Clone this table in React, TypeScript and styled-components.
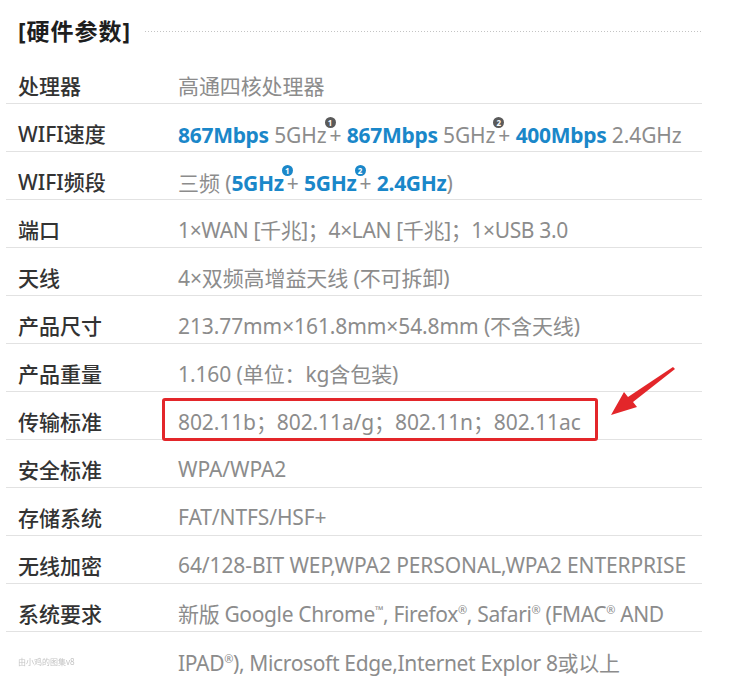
import React from "react";
import styled, { createGlobalStyle } from "styled-components";

const Global = createGlobalStyle`
  html, body { margin: 0; padding: 0; background: #fff; }
  body { font-family: "Noto Sans", "Noto Sans CJK SC", sans-serif; }
`;

const Page = styled.div`
  position: relative;
  width: 696px;
  margin-left: 6px;
  height: 686px;
  overflow: hidden;
`;

const TitleBar = styled.div`
  display: flex;
  align-items: center;
  height: 56px;
  padding-left: 12px;
  padding-top: 4px;
  box-sizing: border-box;
`;

const Title = styled.h2`
  margin: 0;
  font-family: "Noto Sans", "Noto Sans CJK SC", sans-serif;
  font-weight: 700;
  font-size: 23px;
  color: #1e1e1e;
  letter-spacing: 1px;
  white-space: nowrap;
`;

const Dots = styled.div`
  flex: 1;
  height: 1px;
  margin-left: 14px;
  margin-top: 3px;
  background-image: linear-gradient(to right, #c4c4c4 1px, transparent 1px);
  background-size: 3px 1px;
`;

const Row = styled.div<{ $last?: boolean }>`
  display: flex;
  align-items: center;
  height: 48px;
  box-sizing: border-box;
  padding: 11px 0 0 12px;
  border-bottom: ${(p) => (p.$last ? "none" : "1px solid #e2e2e2")};
`;

const Label = styled.div<{ $faint?: boolean }>`
  width: 160px;
  flex: none;
  font-family: "Noto Sans", "Noto Sans CJK SC", sans-serif;
  font-size: ${(p) => (p.$faint ? "8px" : "21px")};
  font-weight: ${(p) => (p.$faint ? 400 : 500)};
  color: ${(p) => (p.$faint ? "#c4c4c4" : "#333")};
  filter: ${(p) => (p.$faint ? "blur(0.5px)" : "none")};
  white-space: nowrap;
`;

const Value = styled.div<{ $tight?: boolean }>`
  position: relative;
  font-family: "Noto Sans", "Noto Sans CJK SC", sans-serif;
  font-size: 21px;
  color: #8c8c8c;
  white-space: nowrap;
  letter-spacing: ${(p) => (p.$tight ? "-0.35px" : "-0.1px")};
`;

const Strong = styled.span`
  color: #1a87c9;
  font-weight: 700;
  letter-spacing: -0.3px;
`;

const Circle = styled.span<{ $bg: string }>`
  display: inline-flex;
  align-items: center;
  justify-content: center;
  width: 11px;
  height: 11px;
  border-radius: 50%;
  background: ${(p) => p.$bg};
  color: #fff;
  font-size: 8px;
  font-weight: 700;
  line-height: 1;
  letter-spacing: 0;
  vertical-align: 17px;
  margin: 0 -6px 0 -2px;
  position: relative;
`;

const Reg = styled.sup`
  font-size: 11px;
  vertical-align: 8px;
  line-height: 0;
`;

const Box = styled.span`
  position: absolute;
  left: -16px;
  top: -8px;
  width: 436px;
  height: 43px;
  box-sizing: border-box;
  border: 3px solid #e3262a;
  border-radius: 3px;
`;

const Arrow = styled.svg`
  position: absolute;
  left: 600px;
  top: 362px;
  width: 70px;
  height: 60px;
`;

const Sup = ({ n, bg }: { n: number; bg: string }) => <Circle $bg={bg}>{n}</Circle>;

export default function App() {
  const gray = "#5a5a5a";
  const blue = "#1a87c9";
  return (
    <>
      <Global />
      <Page>
        <TitleBar>
          <Title>[硬件参数]</Title>
          <Dots />
        </TitleBar>
        <Row>
          <Label>处理器</Label>
          <Value>高通四核处理器</Value>
        </Row>
        <Row>
          <Label>WIFI速度</Label>
          <Value>
            <Strong>867Mbps</Strong> 5GHz<Sup n={1} bg={gray} />+ <Strong>867Mbps</Strong> 5GHz
            <Sup n={2} bg={gray} />+ <Strong>400Mbps</Strong> 2.4GHz
          </Value>
        </Row>
        <Row>
          <Label>WIFI频段</Label>
          <Value>
            三频 (<Strong>5GHz</Strong>
            <Sup n={1} bg={blue} />+ <Strong>5GHz</Strong>
            <Sup n={2} bg={blue} />+ <Strong>2.4GHz</Strong>)
          </Value>
        </Row>
        <Row>
          <Label>端口</Label>
          <Value $tight>1×WAN [千兆]；4×LAN [千兆]；1×USB 3.0</Value>
        </Row>
        <Row>
          <Label>天线</Label>
          <Value>4×双频高增益天线 (不可拆卸)</Value>
        </Row>
        <Row>
          <Label>产品尺寸</Label>
          <Value>213.77mm×161.8mm×54.8mm (不含天线)</Value>
        </Row>
        <Row>
          <Label>产品重量</Label>
          <Value>1.160 (单位：kg含包装)</Value>
        </Row>
        <Row>
          <Label>传输标准</Label>
          <Value>
            802.11b；802.11a/g；802.11n；802.11ac
            <Box />
          </Value>
        </Row>
        <Row>
          <Label>安全标准</Label>
          <Value>WPA/WPA2</Value>
        </Row>
        <Row>
          <Label>存储系统</Label>
          <Value>FAT/NTFS/HSF+</Value>
        </Row>
        <Row>
          <Label>无线加密</Label>
          <Value>64/128-BIT WEP,WPA2 PERSONAL,WPA2 ENTERPRISE</Value>
        </Row>
        <Row>
          <Label>系统要求</Label>
          <Value $tight>
            新版 Google Chrome<Reg>™</Reg>, Firefox<Reg>®</Reg>, Safari<Reg>®</Reg> (FMAC<Reg>®</Reg> AND
          </Value>
        </Row>
        <Row $last>
          <Label $faint>由小鸡的图集v8</Label>
          <Value $tight>
            IPAD<Reg>®</Reg>), Microsoft Edge,Internet Explor 8或以上
          </Value>
        </Row>
        <Arrow viewBox="0 0 70 60">
          <path d="M69 7 L27 40 L31 45 L5 53 L18 30 L22 35 L67 5 Z" fill="#e3262a" />
        </Arrow>
      </Page>
    </>
  );
}
